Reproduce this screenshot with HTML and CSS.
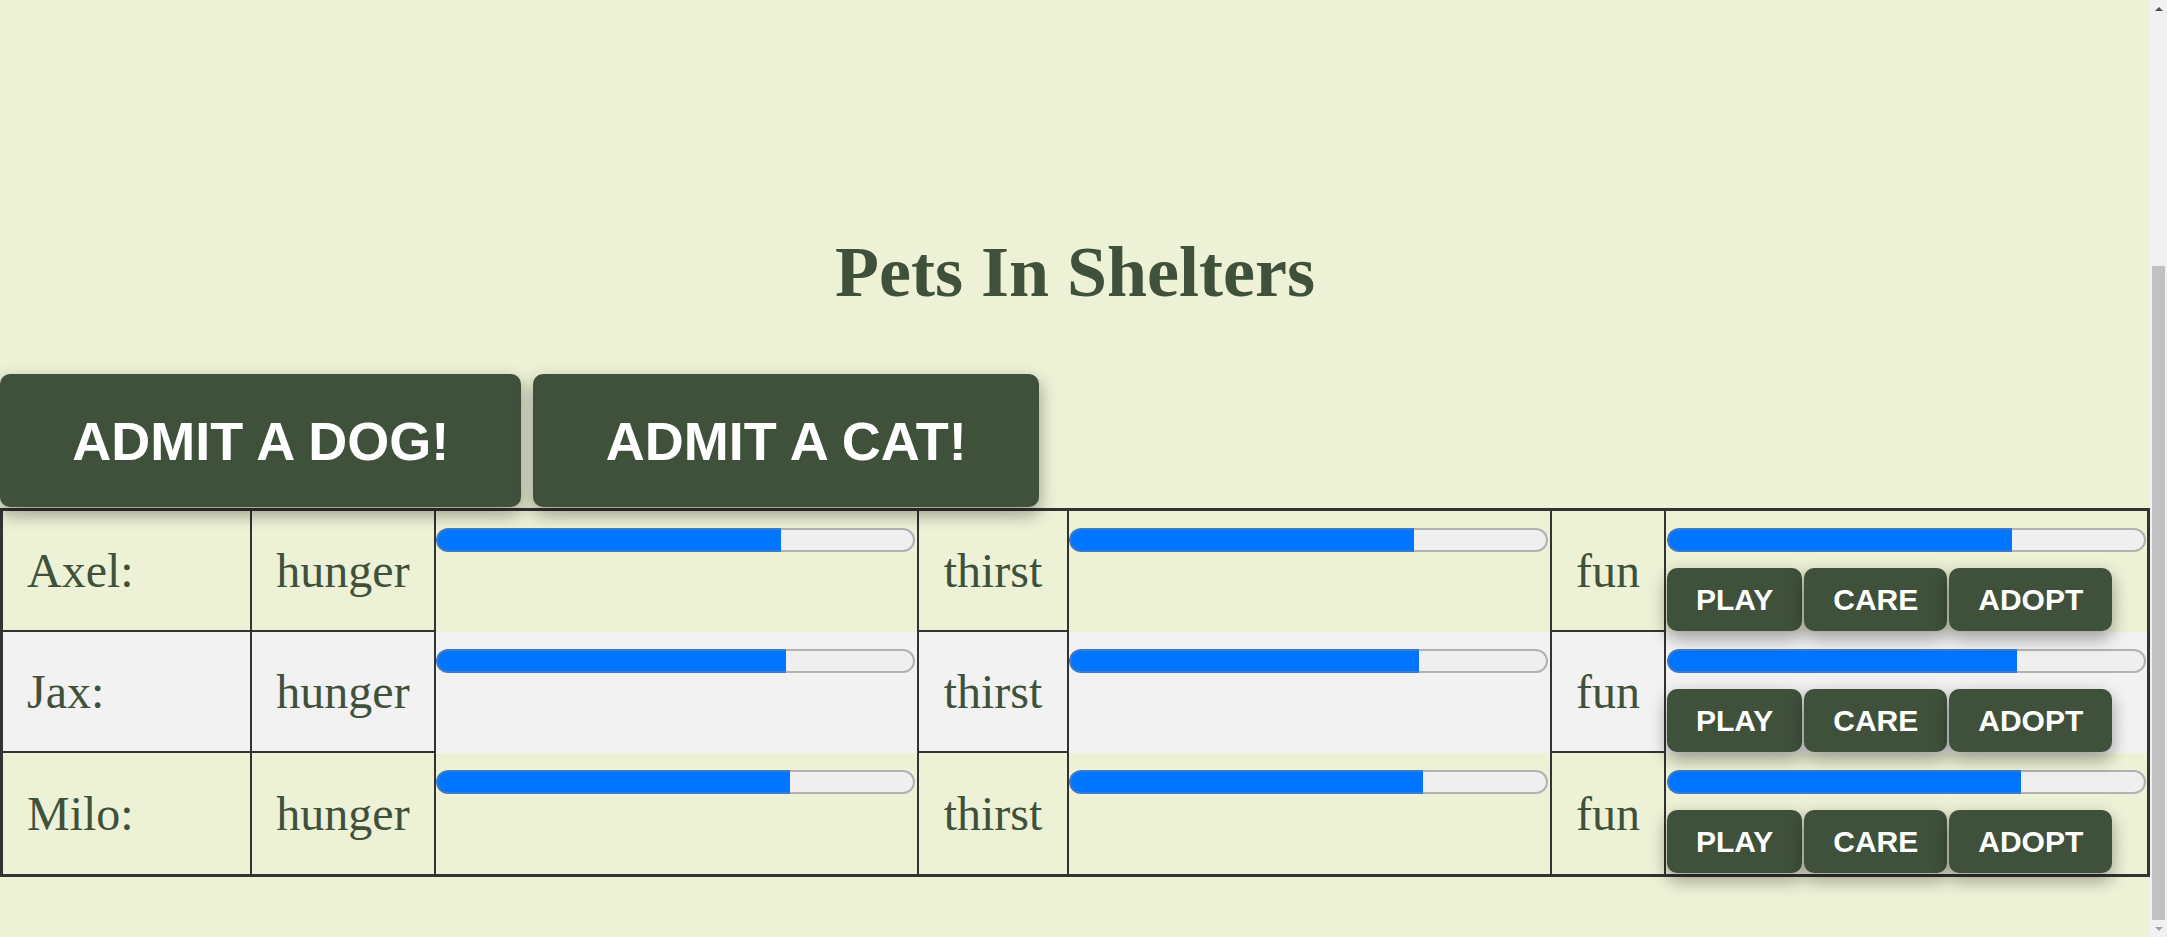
FILE: index.html
```html
<!DOCTYPE html>
<html lang="en">
<head>
<meta charset="utf-8">
<title>Pets In Shelters</title>
<link rel="stylesheet" href="styles.css">
</head>
<body>
<main class="content">
  <h1 class="title">Pets In Shelters</h1>
  <div class="admit-row">
    <button class="btn btn-admit">ADMIT A DOG!</button>
    <button class="btn btn-admit">ADMIT A CAT!</button>
  </div>
  <table class="pets">
    <tbody>
      <tr class="pet-row">
        <td class="c-name">Axel:</td>
        <td class="c-label c-hunger">hunger</td>
        <td class="c-bar"><div class="bar"><div class="fill" style="width:72%"></div></div></td>
        <td class="c-label c-mid">thirst</td>
        <td class="c-bar"><div class="bar"><div class="fill" style="width:72%"></div></div></td>
        <td class="c-label c-fun">fun</td>
        <td class="c-bar c-actions">
          <div class="bar"><div class="fill" style="width:72%"></div></div>
          <div class="actions">
            <button class="btn btn-action">PLAY</button>
            <button class="btn btn-action">CARE</button>
            <button class="btn btn-action">ADOPT</button>
          </div>
        </td>
      </tr>
      <tr class="pet-row">
        <td class="c-name">Jax:</td>
        <td class="c-label c-hunger">hunger</td>
        <td class="c-bar"><div class="bar"><div class="fill" style="width:73%"></div></div></td>
        <td class="c-label c-mid">thirst</td>
        <td class="c-bar"><div class="bar"><div class="fill" style="width:73%"></div></div></td>
        <td class="c-label c-fun">fun</td>
        <td class="c-bar c-actions">
          <div class="bar"><div class="fill" style="width:73%"></div></div>
          <div class="actions">
            <button class="btn btn-action">PLAY</button>
            <button class="btn btn-action">CARE</button>
            <button class="btn btn-action">ADOPT</button>
          </div>
        </td>
      </tr>
      <tr class="pet-row">
        <td class="c-name">Milo:</td>
        <td class="c-label c-hunger">hunger</td>
        <td class="c-bar"><div class="bar"><div class="fill" style="width:74%"></div></div></td>
        <td class="c-label c-mid">thirst</td>
        <td class="c-bar"><div class="bar"><div class="fill" style="width:74%"></div></div></td>
        <td class="c-label c-fun">fun</td>
        <td class="c-bar c-actions">
          <div class="bar"><div class="fill" style="width:74%"></div></div>
          <div class="actions">
            <button class="btn btn-action">PLAY</button>
            <button class="btn btn-action">CARE</button>
            <button class="btn btn-action">ADOPT</button>
          </div>
        </td>
      </tr>
    </tbody>
  </table>
</main>
<div class="scrollbar" aria-hidden="true">
  <div class="sb-arrow"><span class="sb-up"></span></div>
  <div class="sb-track"><div class="sb-thumb"></div></div>
  <div class="sb-arrow"><span class="sb-down"></span></div>
</div>
</body>
</html>
```

FILE: styles.css
```css
html, body {
  margin: 0;
  height: 937px;
  overflow: hidden;
  background: #EDF1D6;
}

body {
  display: flex;
  font-family: "Liberation Serif", "Times New Roman", serif;
  color: #40513B;
}

.content {
  flex: 1;
  min-width: 0;
  padding-top: 231px;
}

.title {
  margin: 0 0 60px;
  font-size: 72px;
  line-height: 83px;
  font-weight: bold;
  text-align: center;
}

.admit-row {
  display: flex;
  gap: 12px;
  margin-bottom: 1px;
}

.btn {
  font-family: "Liberation Sans", Arial, sans-serif;
  font-weight: bold;
  color: #ffffff;
  background: #40513B;
  border: 0;
  border-radius: 10px;
  box-shadow: 0 8px 16px 0 rgba(0, 0, 0, 0.2), 0 6px 20px 0 rgba(0, 0, 0, 0.19);
  cursor: pointer;
  margin: 0;
}

.btn-admit {
  font-size: 54px;
  line-height: 62px;
  padding: 36px 72.25px 35px;
}

.pets {
  width: 100%;
  table-layout: fixed;
  border-collapse: separate;
  border-spacing: 0;
  border: 3px solid #333333;
  font-size: 48px;
}

.pet-row {
  height: 121px;
}

.pet-row:nth-child(even) {
  background: #f2f2f2;
}

.pets td {
  box-sizing: border-box;
  padding: 0 24px;
  vertical-align: middle;
  line-height: normal;
}

.c-name {
  width: 249px;
  text-align: left;
  border-right: 2px solid #333333;
  border-bottom: 2px solid #333333;
}

.c-label {
  text-align: center;
  border-bottom: 2px solid #333333;
}

.c-hunger {
  width: 184px;
  border-right: 2px solid #333333;
}

.c-mid {
  width: 152px;
  border-left: 2px solid #333333;
  border-right: 2px solid #333333;
}

.c-fun {
  width: 116px;
  border-left: 2px solid #333333;
  border-right: 2px solid #333333;
}

.pet-row:last-child .c-name,
.pet-row:last-child .c-label {
  border-bottom: 0;
}

.pets td.c-bar {
  width: 481px;
  padding: 0;
  vertical-align: top;
}

.pets td.c-actions {
  padding-left: 1px;
}

.bar {
  width: 479px;
  height: 24px;
  margin-top: 17px;
  border-radius: 12px;
  background: #efefef;
  box-shadow: inset 0 0 0 2px #b2b2b2;
  overflow: hidden;
  box-sizing: border-box;
}

.fill {
  height: 100%;
  box-sizing: border-box;
  background: #0075ff;
  border: 2px solid #3b7bcc;
  border-right: 0;
  border-radius: 12px 0 0 12px;
}

.actions {
  display: flex;
  gap: 2px;
  margin-top: 16px;
}

.btn-action {
  font-size: 30px;
  line-height: 34px;
  padding: 14.5px 29px;
}

.scrollbar {
  flex: none;
  width: 17px;
  height: 937px;
  display: flex;
  flex-direction: column;
  background: #f1f1f1;
}

.sb-arrow {
  height: 17px;
  display: flex;
  align-items: center;
  justify-content: center;
}

.sb-up {
  width: 0;
  height: 0;
  border-left: 4px solid transparent;
  border-right: 4px solid transparent;
  border-bottom: 4px solid #505050;
}

.sb-down {
  width: 0;
  height: 0;
  border-left: 4px solid transparent;
  border-right: 4px solid transparent;
  border-top: 4px solid #a3a3a3;
}

.sb-track {
  flex: 1;
  padding: 249px 2px 0;
}

.sb-thumb {
  height: 654px;
  background: #c1c1c1;
}
```
